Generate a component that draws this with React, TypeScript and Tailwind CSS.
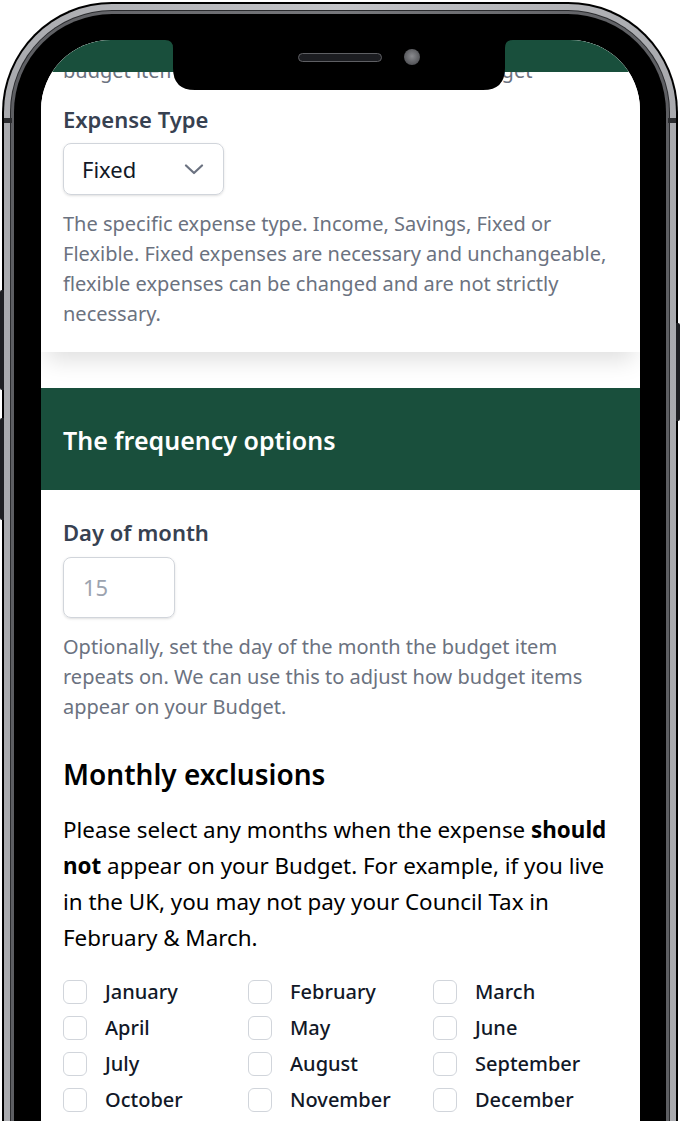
const months = [
  'January', 'February', 'March',
  'April', 'May', 'June',
  'July', 'August', 'September',
  'October', 'November', 'December',
]

function Notch() {
  // notch outline with flared top corners
  return (
    <svg
      className="absolute left-[124px] top-0 z-20"
      width="348"
      height="50"
      viewBox="0 0 348 50"
    >
      <path
        d="M0 0 Q8 0 8 8 L8 28 Q8 50 30 50 L318 50 Q340 50 340 28 L340 8 Q340 0 348 0 Z"
        fill="#000"
      />
    </svg>
  )
}

function Speaker() {
  return (
    <div className="absolute left-[257px] top-[9px] z-30 flex items-center gap-[22px]">
      <div className="h-[9px] w-[84px] rounded-full border border-[#5e5f63] bg-[#1c1d21]" />
      <div className="h-[16px] w-[16px] rounded-full bg-[radial-gradient(circle_at_50%_45%,#8a8b8f,#55565a_70%,#3c3d40)]" />
    </div>
  )
}

function Chevron() {
  return (
    <svg width="20" height="11" viewBox="0 0 20 11" fill="none">
      <path d="M2 1.5 L10 9 L18 1.5" stroke="#6b7280" strokeWidth="2.2" strokeLinecap="round" strokeLinejoin="round" />
    </svg>
  )
}

export default function App() {
  return (
    <div
      className="relative h-[1121px] w-[680px] overflow-hidden bg-white"
      style={{ fontFamily: '"Noto Sans", "Open Sans", sans-serif' }}
    >
      {/* side buttons */}
      <div className="absolute left-0 top-[290px] h-[100px] w-[4px] rounded-l-[2px] bg-[#1e1f22]" />
      <div className="absolute left-0 top-[418px] h-[102px] w-[4px] rounded-l-[2px] bg-[#1e1f22]" />
      <div className="absolute right-0 top-[323px] h-[98px] w-[4px] rounded-r-[2px] bg-[#1e1f22]" />

      {/* phone body rings */}
      <div className="mx-[2px] mt-[2px] h-[1200px] rounded-t-[110px] bg-black p-[2px]">
        <div className="relative h-full rounded-t-[108px] bg-[linear-gradient(90deg,#a9aaae,#c4c5c9_50%,#a9aaae)] p-[6px]">
          {/* antenna lines */}
          <div className="absolute left-0 top-[114px] h-[5px] w-[8px] bg-[#2b2c2f]" />
          <div className="absolute right-0 top-[114px] h-[5px] w-[8px] bg-[#2b2c2f]" />
          <div className="h-full rounded-t-[102px] bg-[#2a2b2e] p-[1px]">
            <div className="h-full rounded-t-[101px] bg-[linear-gradient(90deg,#5d5e62,#76777b_50%,#5d5e62)] p-[3px]">
              <div className="h-full rounded-t-[98px] bg-black pl-[27px] pr-[26px] pt-[26px]">
                {/* screen */}
                <div className="relative h-full overflow-hidden rounded-t-[70px] bg-white">
                  <div className="absolute inset-x-0 top-0 z-10 h-[32px] bg-[#194f3c]" />
                  <Notch />
                  <Speaker />

                  {/* basic options card */}
                  <div className="bg-white px-[22px] pb-[23px] pt-[16px] shadow-[0_14px_22px_-6px_rgba(0,0,0,0.13)]">
                    <p className="text-[20px] leading-[30px] text-[#6b7280]">
                      budget item is income or expense on your budget
                    </p>
                    <label className="mt-[18px] block text-[22px] font-semibold leading-[30px] text-[#374151]">
                      Expense Type
                    </label>
                    <div className="mt-[9px] flex h-[52px] w-[161px] items-center justify-between rounded-lg border border-[#d1d5db] pl-[18px] pr-[19px] shadow-sm">
                      <span className="text-[22px] text-[#111827]">Fixed</span>
                      <Chevron />
                    </div>
                    <p className="mt-[14px] text-[20px] leading-[30px] text-[#6b7280]">
                      The specific expense type. Income, Savings, Fixed or Flexible. Fixed expenses are
                      necessary and unchangeable, flexible expenses can be changed and are not strictly
                      necessary.
                    </p>
                  </div>

                  {/* frequency card */}
                  <div className="mt-[36px]">
                    <div className="flex h-[102px] items-center bg-[#194f3c] px-[22px] pt-[3px]">
                      <h2 className="text-[25px] font-semibold text-white">The frequency options</h2>
                    </div>
                    <div className="px-[22px] pt-[27px]">
                      <label className="block text-[22px] font-semibold leading-[30px] text-[#374151]">
                        Day of month
                      </label>
                      <div className="mt-[10px] flex h-[61px] w-[112px] items-center rounded-lg border border-[#d1d5db] pl-[19px] shadow-sm">
                        <span className="text-[22px] text-[#9ca3af]">15</span>
                      </div>
                      <p className="mt-[14px] text-[20px] leading-[30px] text-[#6b7280]">
                        Optionally, set the day of the month the budget item repeats on. We can use this to
                        adjust how budget items appear on your Budget.
                      </p>

                      <h3 className="mt-[34px] text-[28px] font-semibold leading-[36px] text-black">
                        Monthly exclusions
                      </h3>
                      <p className="mt-[20px] text-[22.4px] leading-[36px] text-black">
                        Please select any months when the expense <strong className="font-bold">should</strong>{' '}
                        <strong className="font-bold">not</strong> appear on your Budget. For example, if you
                        live in the UK, you may not pay your Council Tax in February &amp; March.
                      </p>

                      <div className="mt-[18px] grid grid-cols-3">
                        {months.map((m) => (
                          <label key={m} className="flex h-[36px] items-center gap-[18px]">
                            <span className="h-[24px] w-[24px] shrink-0 rounded-[6px] border border-[#d1d5db] bg-white" />
                            <span className="text-[20px] font-medium text-[#111827]">{m}</span>
                          </label>
                        ))}
                      </div>
                    </div>
                  </div>
                </div>
              </div>
            </div>
          </div>
        </div>
      </div>
    </div>
  )
}
